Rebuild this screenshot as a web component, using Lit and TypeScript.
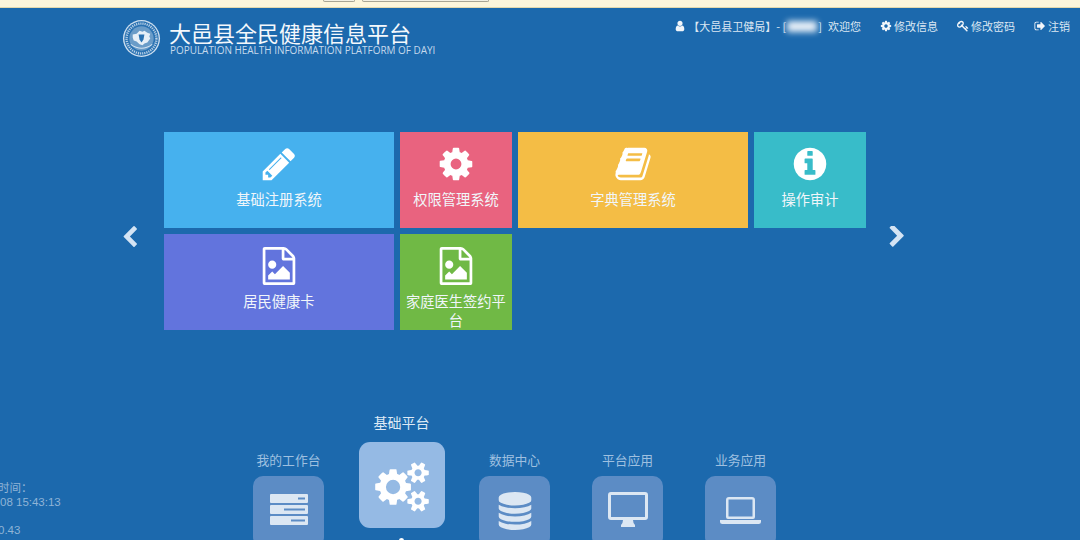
import { LitElement, html, css, svg } from "lit";
import { customElement } from "lit/decorators.js";

const P = {
  cog: "M1152 896q0-106-75-181t-181-75-181 75-75 181 75 181 181 75 181-75 75-181zm512-109v222q0 12-8 23t-20 13l-185 28q-19 54-39 91 35 50 107 138 10 12 10 25t-9 23q-27 37-99 108t-94 71q-12 0-26-9l-138-108q-44 23-91 38-16 136-29 186-7 28-36 28h-222q-14 0-24.500-8.500t-11.500-21.500l-28-184q-49-16-90-37l-141 107q-10 9-25 9-14 0-25-11-126-114-165-168-7-10-7-23 0-12 8-23 15-21 51-66.500t54-70.500q-27-50-41-99l-183-27q-13-2-21-12.500t-8-23.500v-222q0-12 8-23t19-13l186-28q14-46 39-92-40-57-107-138-10-12-10-24 0-10 9-23 26-36 98.500-107.500t94.500-71.500q13 0 26 10l138 107q44-23 91-38 16-136 29-186 7-28 36-28h222q14 0 24.500 8.500t11.500 21.500l28 184q49 16 90 37l142-107q9-9 24-9 13 0 25 10 129 119 165 170 7 8 7 22 0 12-8 23-15 21-51 66.500t-54 70.500q26 50 41 98l183 28q13 2 21 12.500t8 23.500z",
  pencil: "M491 1536l91-91-235-235-91 91v107h128v128h107zm523-928q0-22-22-22-10 0-17 7l-542 542q-7 7-7 17 0 22 22 22 10 0 17-7l542-542q7-7 7-17zm-54-192l416 416-832 832h-416v-416zm683 96q0 53-37 90l-166 166-416-416 166-165q36-38 90-38 53 0 91 38l235 234q37 39 37 91z",
  info: "M1152 1376v-160q0-14-9-23t-23-9h-96v-512q0-14-9-23t-23-9h-320q-14 0-23 9t-9 23v160q0 14 9 23t23 9h96v320h-96q-14 0-23 9t-9 23v160q0 14 9 23t23 9h448q14 0 23-9t9-23zm-128-896v-160q0-14-9-23t-23-9h-192q-14 0-23 9t-9 23v160q0 14 9 23t23 9h192q14 0 23-9t9-23zm640 416q0 209-103 385.500t-279.500 279.500-385.500 103-385.500-103-279.500-279.500-103-385.500 103-385.500 279.500-279.500 385.500-103 385.500 103 279.500 279.500 103 385.500z",
  book: "M1703 478q40 57 18 129l-275 906q-19 64-76.500 107.500t-122.500 43.500h-923q-77 0-148.500-53.500t-99.500-131.500q-24-67-2-127 0-4 3-27t4-37q1-8-3-21.500t-3-19.500q2-11 8-21t16.500-23.500 16.500-23.500q23-38 45-91.500t30-91.500q3-10 .5-30t-.5-28q3-11 17-28t17-23q21-36 42-92t25-90q1-9-2.500-32t.5-28q4-13 22-30.500t22-22.500q19-26 42.500-84.500t27.500-96.500q1-8-3-25.500t-2-26.500q2-8 9-18t18-23 17-21q8-12 16.500-30.500t15-35 16-36 19.500-32 26.500-23.500 36-11.500 47.500 5.500l-1 3q38-9 51-9h761q74 0 114 56t18 130l-274 906q-36 119-71.500 153.500t-128.500 34.500h-869q-27 0-38 15-11 16-1 43 24 70 144 70h923q29 0 56-15.500t35-41.500l300-987q7-22 5-57 38 15 59 43zm-1064 2q-4 13 2 22.500t20 9.500h608q13 0 25.500-9.500t16.500-22.500l21-64q4-13-2-22.500t-20-9.500h-608q-13 0-25.500 9.500t-16.500 22.500zm-83 256q-4 13 2 22.500t20 9.500h608q13 0 25.500-9.500t16.500-22.500l21-64q4-13-2-22.500t-20-9.500h-608q-13 0-25.500 9.500t-16.500 22.500z",
  file: "M1596 380q28 28 48 76t20 88v1152q0 40-28 68t-68 28h-1344q-40 0-68-28t-28-68v-1600q0-40 28-68t68-28h896q40 0 88 20t76 48zm-444-244v376h376q-10-29-22-41l-313-313q-12-12-41-22zm384 1528v-1024h-416q-40 0-68-28t-28-68v-416h-768v1536h1280zm-128-448v320h-1024v-192l192-192 128 128 384-384zm-832-192q-80 0-136-56t-56-136 56-136 136-56 136 56 56 136-56 136-136 56z",
  user: "M1536 1399q0 109-62.500 187t-150.500 78h-854q-88 0-150.500-78t-62.500-187q0-85 8.500-160.500t31.500-152 58.500-131 94-89 134.500-34.500q131 128 313 128t313-128q76 0 134.500 34.500t94 89 58.500 131 31.500 152 8.500 160.500zm-256-887q0 159-112.500 271.500t-271.500 112.500-271.500-112.500-112.500-271.500 112.500-271.500 271.500-112.500 271.500 112.500 112.500 271.500z",
  key: "M832 512q0-80-56-136t-136-56-136 56-56 136q0 42 19 83-41-19-83-19-80 0-136 56t-56 136 56 136 136 56 136-56 56-136q0-42-19-83 41 19 83 19 80 0 136-56t56-136zm851 704q0 17-49 66t-66 49q-9 0-28.500-16t-36.500-33-38.500-40-24.500-26l-96 96 220 220q28 28 28 68 0 42-39 81t-81 39q-40 0-68-28l-671-671q-176 131-365 131-163 0-265.500-102.500t-102.500-265.500q0-160 95-313t248-248 313-95q163 0 265.500 102.500t102.500 265.500q0 189-131 365l355 355 96-96q-3-3-26-24.500t-40-38.500-33-36.500-16-28.500q0-17 49-66t66-49q13 0 23 10 6 6 46 44.500t82 79.500 86.500 86 73 78 28.500 41z",
  signout: "M704 1440q0 4 1 20t.5 26.500-3 23.500-10 19.500-20.500 6.500h-320q-119 0-203.500-84.500t-84.500-203.500v-704q0-119 84.500-203.500t203.500-84.500h320q13 0 22.500 9.500t9.500 22.500q0 4 1 20t.5 26.500-3 23.500-10 19.500-20.500 6.500h-320q-66 0-113 47t-47 113v704q0 66 47 113t113 47h312l11.500 1 11.500 3 8 5.500 7 9 2 13.500zm928-544q0 26-19 45l-544 544q-19 19-45 19t-45-19-19-45v-288h-448q-26 0-45-19t-19-45v-384q0-26 19-45t45-19h448v-288q0-26 19-45t45-19 45 19l544 544q19 19 19 45z",
  left: "M1427 301l-531 531 531 531q19 19 19 45t-19 45l-166 166q-19 19-45 19t-45-19l-742-742q-19-19-19-45t19-45l742-742q19-19 45-19t45 19l166 166q19 19 19 45t-19 45z",
  right: "M1363 877l-742 742q-19 19-45 19t-45-19l-166-166q-19-19-19-45t19-45l531-531-531-531q-19-19-19-45t19-45l166-166q19-19 45-19t45 19l742 742q19 19 19 45t-19 45z",
  database: "M896 768q237 0 443-43t325-127v170q0 69-103 128t-280 93.500-385 34.500-385-34.500-280-93.500-103-128v-170q119 84 325 127t443 43zm0 768q237 0 443-43t325-127v170q0 69-103 128t-280 93.500-385 34.500-385-34.500-280-93.500-103-128v-170q119 84 325 127t443 43zm0-384q237 0 443-43t325-127v170q0 69-103 128t-280 93.500-385 34.500-385-34.500-280-93.500-103-128v-170q119 84 325 127t443 43zm0-1152q208 0 385 34.500t280 93.500 103 128v128q0 69-103 128t-280 93.500-385 34.500-385-34.500-280-93.500-103-128v-128q0-69 103-128t280-93.500 385-34.500z",
  cogs: "M896 896q0-106-75-181t-181-75-181 75-75 181 75 181 181 75 181-75 75-181zm768 512q0-52-38-90t-90-38-90 38-38 90q0 53 37.500 90.500t90.500 37.500 90.500-37.500 37.500-90.500zm0-1024q0-52-38-90t-90-38-90 38-38 90q0 53 37.500 90.500t90.500 37.500 90.500-37.500 37.500-90.500zm-384 421v185q0 10-7 19.500t-16 10.500l-155 24q-11 35-32 76 34 48 90 115 7 11 7 20 0 12-7 19-23 30-82.500 89.500t-78.500 59.500q-11 0-21-7l-115-90q-37 19-77 31-11 108-23 155-7 24-30 24h-186q-11 0-20-7.500t-10-17.500l-23-153q-34-10-75-31l-118 89q-7 7-20 7-11 0-21-8-144-133-144-160 0-9 7-19 10-14 41-53t47-61q-23-44-35-82l-152-24q-10-1-17-9.500t-7-19.500v-185q0-10 7-19.500t16-10.500l155-24q11-35 32-76-34-48-90-115-7-11-7-20 0-12 7-20 22-30 82-89t79-59q11 0 21 7l115 90q34-18 77-32 11-108 23-154 7-24 30-24h186q11 0 20 7.500t10 17.500l23 153q34 10 75 31l118-89q8-7 20-7 11 0 21 8 144 133 144 160 0 8-7 19-12 16-42 54t-45 60q23 48 34 82l152 23q10 2 17 10.500t7 19.500zm640 533v140q0 16-149 31-12 27-30 52 51 113 51 138 0 4-4 7-122 71-124 71-8 0-46-47t-52-68q-20 2-30 2t-30-2q-14 21-52 68t-46 47q-2 0-124-71-4-3-4-7 0-25 51-138-18-25-30-52-149-15-149-31v-140q0-16 149-31 13-29 30-52-51-113-51-138 0-4 4-7 4-2 35-20t59-34 30-16q8 0 46 46.500t52 67.500q20-2 30-2t30 2q51-71 92-112l6-2q4 0 124 70 4 3 4 7 0 25-51 138 17 23 30 52 149 15 149 31zm0-1024v140q0 16-149 31-12 27-30 52 51 113 51 138 0 4-4 7-122 71-124 71-8 0-46-47t-52-68q-20 2-30 2t-30-2q-14 21-52 68t-46 47q-2 0-124-71-4-3-4-7 0-25 51-138-18-25-30-52-149-15-149-31v-140q0-16 149-31 13-29 30-52-51-113-51-138 0-4 4-7 4-2 35-20t59-34 30-16q8 0 46 46.500t52 67.500q20-2 30-2t30 2q51-71 92-112l6-2q4 0 124 70 4 3 4 7 0 25-51 138 17 23 30 52 149 15 149 31z",
};

const fa = (d: string, cls: string, vb = "0 0 1792 1792") =>
  html`<svg class=${cls} viewBox=${vb} aria-hidden="true"><path fill="currentColor" d=${d}></path></svg>`;

const tiles = [
  { label: "基础注册系统", icon: P.pencil, cls: "sky" },
  { label: "权限管理系统", icon: P.cog, cls: "rose" },
  { label: "字典管理系统", icon: P.book, cls: "amber" },
  { label: "操作审计", icon: P.info, cls: "teal" },
  { label: "居民健康卡", icon: P.file, cls: "violet" },
  { label: "家庭医生签约平台", icon: P.file, cls: "leaf" },
];

const serverIcon = html`<svg class="d-server" viewBox="0 0 38 31" aria-hidden="true">
  <path fill="currentColor" fill-rule="evenodd" d="M1 0h36a1 1 0 0 1 1 1v7a1 1 0 0 1-1 1H1a1 1 0 0 1-1-1V1a1 1 0 0 1 1-1zM28 3.500v2h7v-2zM1 11h36a1 1 0 0 1 1 1v7a1 1 0 0 1-1 1H1a1 1 0 0 1-1-1v-7a1 1 0 0 1 1-1zM14 14.500v2h21v-2zM1 22h36a1 1 0 0 1 1 1v7a1 1 0 0 1-1 1H1a1 1 0 0 1-1-1v-7a1 1 0 0 1 1-1zM21 25.500v2h14v-2z"></path>
</svg>`;
const desktopIcon = html`<svg class="d-desktop" viewBox="0 0 40 35" aria-hidden="true">
  <path fill="currentColor" fill-rule="evenodd" d="M3 0h34a3 3 0 0 1 3 3v22a3 3 0 0 1-3 3H25q0 3 2 5v2H13v-2q2-2 2-5H3a3 3 0 0 1-3-3V3a3 3 0 0 1 3-3zM3 3v22h34V3z"></path>
</svg>`;
const laptopIcon = html`<svg class="d-laptop" viewBox="0 0 41 27" aria-hidden="true">
  <path fill="currentColor" fill-rule="evenodd" d="M9 0h23a3 3 0 0 1 3 3v17a2 2 0 0 1-2 2H8a2 2 0 0 1-2-2V3a3 3 0 0 1 3-3zM8.500 2.500v17h24v-17zM0 23h41v1.500a2.500 2.500 0 0 1-2.500 2.500h-36A2.500 2.500 0 0 1 0 24.500z"></path>
</svg>`;

const dock = [
  { label: "我的工作台", icon: serverIcon },
  { label: "基础平台", icon: fa(P.cogs, "d-cogs", "0 0 1920 1792"), active: true },
  { label: "数据中心", icon: fa(P.database, "d-db") },
  { label: "平台应用", icon: desktopIcon },
  { label: "业务应用", icon: laptopIcon },
];

const emblem = html`<svg class="logo" viewBox="0 0 40 40" aria-hidden="true">
  <circle cx="20" cy="20" r="19" fill="#cfe0f0"></circle>
  <circle cx="20" cy="20" r="17.600" fill="#2a72b2"></circle>
  <circle cx="20" cy="20" r="15.300" fill="none" stroke="#b9d1e7" stroke-width="2.400" stroke-dasharray="1.200 1"></circle>
  <circle cx="20" cy="20" r="12.500" fill="#6a9cc8"></circle>
  ${svg`<path fill="#e6eff7" d="M11 16l4-1 3-3 3 1 2-1 3 2 3 1-1 3 1 2-3 4-3 1-2 2-3-1-3-3-3-1-1-3z"></path>
  <path fill="#2a72b2" d="M17 16h6l-1 5-2 3-2-3z"></path>
  <path fill="none" stroke="#d4e3f1" stroke-width="1.200" d="M9 26q11 8 22 0"></path>`}
</svg>`;

@customElement("app-root")
export class AppRoot extends LitElement {
  static styles = css`
    :host {
      display: block;
      width: 1080px;
      height: 540px;
      overflow: hidden;
      background: #1c69ad;
      font-family: "Noto Sans CJK SC", "Liberation Sans", sans-serif;
      color: #fff;
    }
    .notice {
      height: 7px;
      background: #fdf6dc;
      border-bottom: 1px solid #e3d9ae;
      display: flex;
      gap: 7px;
      padding-left: 323px;
    }
    .notice i {
      display: block;
      height: 1px;
      border: 1px solid #a8a594;
      border-top: 0;
      border-radius: 0 0 2px 2px;
      background: #f4f1e4;
    }
    .notice .b1 { width: 30px; }
    .notice .b2 { width: 125px; }
    .header {
      height: 124px;
      display: flex;
      justify-content: space-between;
      align-items: flex-start;
      padding: 11px 10px 0 122px;
      box-sizing: border-box;
    }
    .brand { display: flex; gap: 8px; }
    .logo { width: 39px; height: 39px; flex: none; }
    .title {
      font-size: 22px;
      line-height: 24px;
      margin-top: 1px;
      color: #f4f8fc;
    }
    .sub {
      font-family: "Open Sans", "Liberation Sans", sans-serif;
      font-size: 9.950px;
      line-height: 10px;
      margin-top: 1px;
      margin-left: 1px;
      color: #c5d9ec;
      white-space: nowrap;
    }
    .nav {
      display: flex;
      align-items: center;
      font-size: 11px;
      line-height: 16px;
      margin-top: -1px;
      color: #dbe7f3;
    }
    .nav .ico { width: 12px; height: 12px; flex: none; margin-right: 2px; color: #f2f6fa; }
    .nav .item { display: flex; align-items: center; margin-left: 19px; }
    .name { display: flex; align-items: center; }
    .blur {
      display: inline-block;
      width: 30px;
      height: 11px;
      margin: 0 1px;
      background: #e8f0f8;
      filter: blur(3px);
    }
    .welcome { margin-left: 6px; }
    .stage {
      display: flex;
      align-items: center;
      padding-left: 122px;
      height: 198px;
    }
    .arrow { width: 15px; height: 21px; flex: none; margin-top: 11px; color: #d4e4f4; }
    .grid {
      display: grid;
      grid-template-columns: 230px 112px 230px 112px;
      grid-template-rows: 96px 96px;
      gap: 6px;
      margin: 0 23px 0 27px;
    }
    .tile {
      box-sizing: border-box;
      padding-top: 13px;
      display: flex;
      flex-direction: column;
      align-items: center;
      overflow: hidden;
    }
    .tile svg { width: 38px; height: 38px; flex: none; }
    .tile span {
      display: block;
      margin-top: 6px;
      padding: 0 5px;
      font-size: 14.250px;
      line-height: 19px;
      text-align: center;
      color: #f1f6fa;
    }
    .sky { background: #46b1ee; }
    .rose { background: #e9637f; }
    .amber { background: #f4bd45; }
    .teal { background: #38bcc9; }
    .violet { background: #6274dd; }
    .leaf { background: #70b945; }
    .bottom {
      display: flex;
      margin-top: 84px;
    }
    .status {
      width: 232px;
      flex: none;
      padding-top: 67px;
      font-size: 11.500px;
      line-height: 14px;
      color: #8fb4d6;
      font-family: "Liberation Sans", "Noto Sans CJK SC", sans-serif;
    }
    .status div { min-height: 14px; }
    .status .cut { margin-left: -2px; }
    .dock { display: flex; align-items: flex-start; }
    .app {
      width: 113px;
      margin-top: 37px;
      display: flex;
      flex-direction: column;
      align-items: center;
      font-size: 12.800px;
      color: #9fc0e0;
    }
    .app .cap { line-height: 18px; }
    .app .box {
      width: 71px;
      height: 71px;
      margin-top: 7px;
      border-radius: 10px;
      background: #5c8cc5;
      color: #dce7f3;
      display: flex;
      justify-content: center;
      box-sizing: border-box;
    }
    .app.on { margin-top: -1px; color: #dde9f5; font-size: 14px; }
    .app.on .box {
      width: 86px;
      height: 86px;
      margin-top: 11px;
      border-radius: 11px;
      background: #95bae4;
      color: #fff;
    }
    .pip { width: 5px; height: 5px; margin-top: 10px; border-radius: 50%; background: #fff; }
    .d-server { width: 38px; height: 31px; margin-top: 18px; }
    .d-cogs { width: 54px; height: 50px; margin-top: 20px; }
    .d-db { width: 38px; height: 38px; margin-top: 16px; }
    .d-desktop { width: 40px; height: 35px; margin-top: 16px; }
    .d-laptop { width: 41px; height: 27px; margin-top: 21px; }
  `;

  render() {
    return html`
      <div class="notice"><i class="b1"></i><i class="b2"></i></div>
      <header class="header">
        <div class="brand">
          ${emblem}
          <div>
            <div class="title">大邑县全民健康信息平台</div>
            <div class="sub">POPULATION HEALTH INFORMATION PLATFORM OF DAYI</div>
          </div>
        </div>
        <nav class="nav">
          <div class="name">
            ${fa(P.user, "ico")}<span>【大邑县卫健局】- [</span><span class="blur"></span><span>]</span>
            <span class="welcome">欢迎您</span>
          </div>
          <div class="item">${fa(P.cog, "ico")}修改信息</div>
          <div class="item">${fa(P.key, "ico")}修改密码</div>
          <div class="item">${fa(P.signout, "ico")}注销</div>
        </nav>
      </header>
      <section class="stage">
        ${fa(P.left, "arrow", "288 64 1158 1536")}
        <div class="grid">
          ${tiles.map((t) => html`<div class="tile ${t.cls}">${fa(t.icon, "")}<span>${t.label}</span></div>`)}
        </div>
        ${fa(P.right, "arrow", "320 128 1062 1536")}
      </section>
      <section class="bottom">
        <div class="status">
          <div class="cut">时间：</div>
          <div>08 15:43:13</div>
          <div></div>
          <div class="cut">0.43</div>
        </div>
        <div class="dock">
          ${dock.map(
            (d) => html`<div class="app ${d.active ? "on" : ""}">
              <div class="cap">${d.label}</div>
              <div class="box">${d.icon}</div>
              ${d.active ? html`<div class="pip"></div>` : ""}
            </div>`
          )}
        </div>
      </section>
    `;
  }
}
